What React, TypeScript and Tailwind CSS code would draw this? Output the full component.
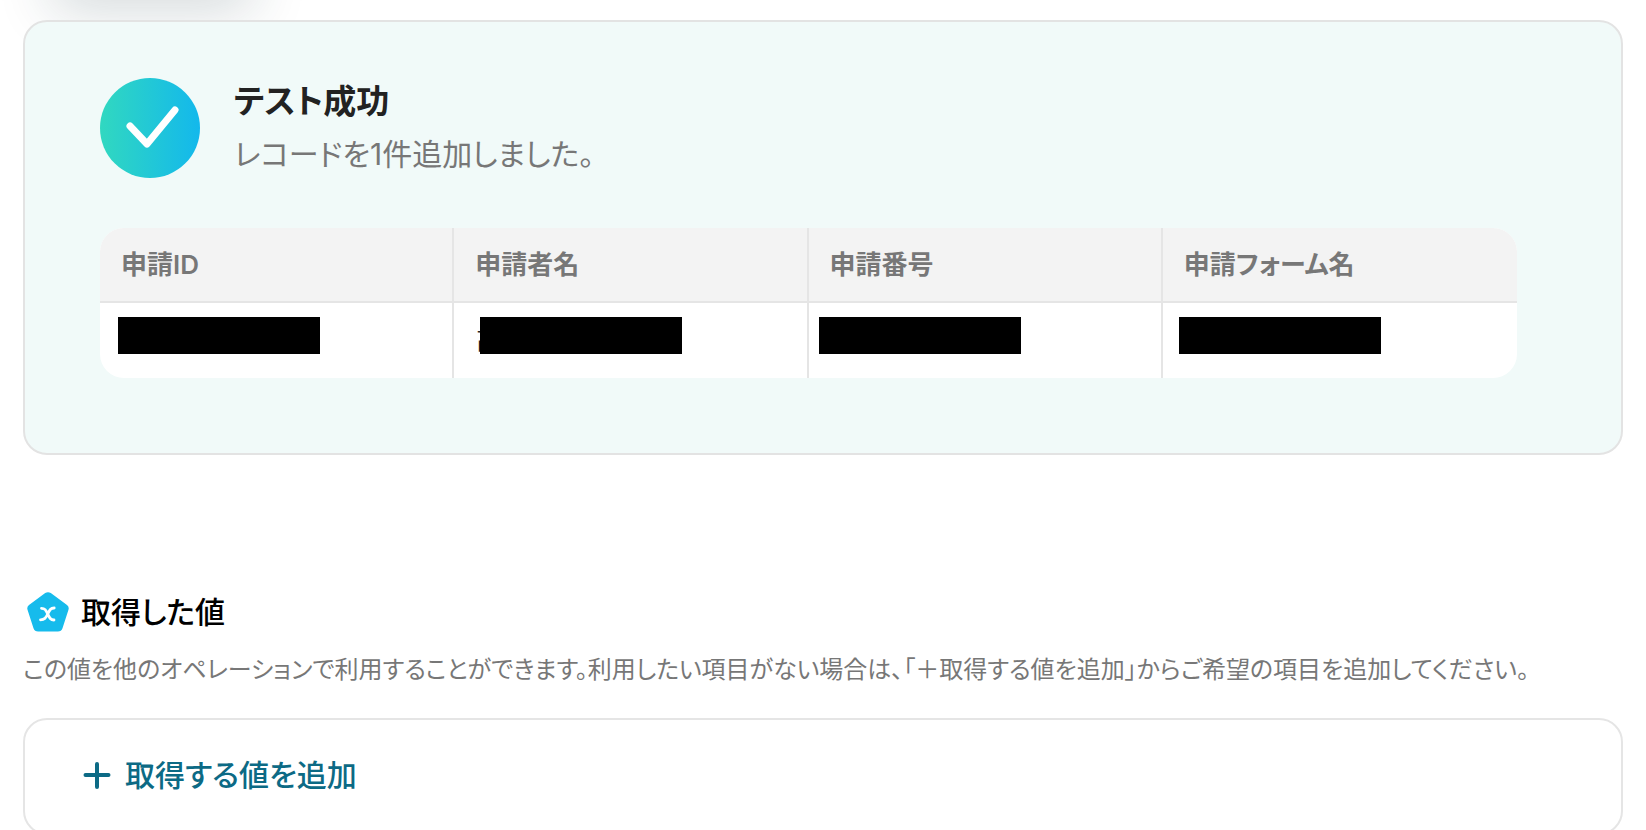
type Column = {
  label: string;
  value: string;
  mask: string;
};

const columns: Column[] = [
  { label: "申請ID", value: "", mask: "left-[18px]" },
  { label: "申請者名", value: "高", mask: "left-[26px]" },
  { label: "申請番号", value: "", mask: "left-[10px]" },
  { label: "申請フォーム名", value: "", mask: "left-[16px]" },
];

function SuccessIcon() {
  return (
    <svg viewBox="0 0 100 100" className="size-[100px] shrink-0" aria-hidden="true">
      <defs>
        <linearGradient id="success" x1="0" y1="0" x2="1" y2="0">
          <stop offset="0" stopColor="#31d8c0" />
          <stop offset="1" stopColor="#13b8ec" />
        </linearGradient>
      </defs>
      <circle cx="50" cy="50" r="50" fill="url(#success)" />
      <path
        d="M30 48 L47 66 L75 32"
        fill="none"
        stroke="#fff"
        strokeWidth="7"
        strokeLinecap="round"
        strokeLinejoin="round"
      />
    </svg>
  );
}

function ValueIcon() {
  return (
    <svg viewBox="0 0 42 40" className="h-10 w-[42px] shrink-0" aria-hidden="true">
      <path
        d="M18.2 1.1a5 5 0 0 1 5.6 0L40 12.9a4.6 4.6 0 0 1 1.4 5.1l-5.9 18.2a5 5 0 0 1-4.6 3.3H11.1a5 5 0 0 1-4.6-3.3L.6 18a4.6 4.6 0 0 1 1.4-5.1Z"
        fill="#16bbec"
      />
      <path
        d="M14.5 16.3c3.4 0 4.3 1.7 6.2 5.7s2.8 6 6.3 6M27.2 16c-3.7 0-4.6 2-6.5 6s-3.2 5.8-7.2 5.8"
        fill="none"
        stroke="#fff"
        strokeWidth="2.8"
        strokeLinecap="round"
      />
    </svg>
  );
}

function PlusIcon() {
  return (
    <svg viewBox="0 0 28 28" className="size-7 shrink-0" aria-hidden="true">
      <path
        d="M14 3v23M2.5 14h23"
        stroke="currentColor"
        strokeWidth="4"
        strokeLinecap="round"
      />
    </svg>
  );
}

function TestResult() {
  return (
    <section className="relative rounded-3xl border-2 border-[#e3e3e3] bg-[#f1faf9] pt-14 pr-[104px] pb-[75px] pl-[75px]">
      <div className="flex items-start gap-[34px]">
        <SuccessIcon />
        <div>
          <h2 className="text-[33px] leading-[46px] font-bold text-[#222]">
            テスト成功
          </h2>
          <p className="mt-[7px] text-[30px] leading-[46px] text-[#777]">
            レコードを1件追加しました。
          </p>
        </div>
      </div>

      <div className="mt-[50px] overflow-hidden rounded-3xl bg-white">
        <table className="w-full table-fixed border-separate border-spacing-0 text-left">
          <thead>
            <tr className="bg-[#f3f3f3]">
              {columns.map((column) => (
                <th
                  key={column.label}
                  className="h-[75px] border-r-2 border-b-2 border-[#e5e5e5] px-[21px] text-[26px] font-semibold text-[#777] last:border-r-0"
                >
                  {column.label}
                </th>
              ))}
            </tr>
          </thead>
          <tbody>
            <tr>
              {columns.map((column) => (
                <td
                  key={column.label}
                  className="relative h-[75px] border-r-2 border-[#e5e5e5] px-[22px] text-2xl text-[#222] last:border-r-0"
                >
                  {column.value}
                  <span
                    className={`absolute top-[14px] h-[37px] w-[202px] bg-black ${column.mask}`}
                  />
                </td>
              ))}
            </tr>
          </tbody>
        </table>
      </div>
    </section>
  );
}

export default function App() {
  return (
    <main className="relative h-screen overflow-hidden bg-white px-[23px] pt-5 font-['Inter','Noto_Sans_CJK_JP',sans-serif] [font-feature-settings:'palt']">
      <div className="absolute -top-10 left-16 h-8 w-44 shadow-[0_4px_56px_12px_rgba(20,50,60,0.2)]" />

      <TestResult />

      <section className="mt-[134px]">
        <div className="flex items-center gap-3 pl-1">
          <ValueIcon />
          <h2 className="text-[30px] leading-[46px] font-medium text-black">
            取得した値
          </h2>
        </div>
        <p className="mt-4 text-2xl leading-[38px] whitespace-nowrap text-[#777]">
          この値を他のオペレーションで利用することができます。利用したい項目がない場合は、「＋取得する値を追加」からご希望の項目を追加してください。
        </p>

        <div className="mt-[29px] rounded-3xl border-2 border-[#e5e5e5] px-[58px] pt-[31px] pb-[34px]">
          <button
            type="button"
            className="flex cursor-pointer items-center gap-[14px] text-[30px] leading-[48px] font-medium text-[#0c6a85]"
          >
            <PlusIcon />
            取得する値を追加
          </button>
        </div>
      </section>
    </main>
  );
}
